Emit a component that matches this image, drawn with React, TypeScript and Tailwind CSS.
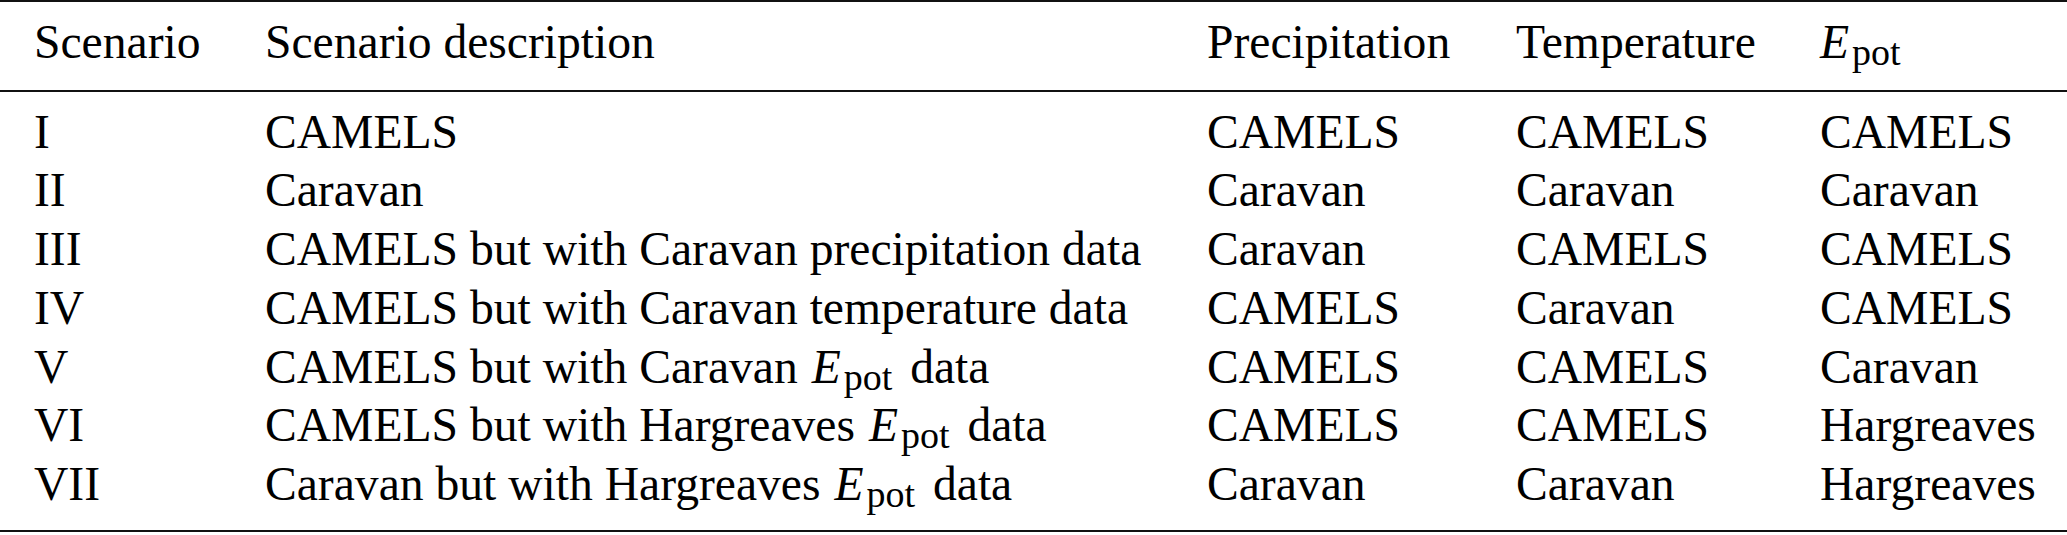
const ROWS = [
  { id: "I", desc: ["CAMELS"], p: "CAMELS", t: "CAMELS", e: "CAMELS" },
  { id: "II", desc: ["Caravan"], p: "Caravan", t: "Caravan", e: "Caravan" },
  { id: "III", desc: ["CAMELS but with Caravan precipitation data"], p: "Caravan", t: "CAMELS", e: "CAMELS" },
  { id: "IV", desc: ["CAMELS but with Caravan temperature data"], p: "CAMELS", t: "Caravan", e: "CAMELS" },
  { id: "V", desc: ["CAMELS but with Caravan ", " data"], p: "CAMELS", t: "CAMELS", e: "Caravan" },
  { id: "VI", desc: ["CAMELS but with Hargreaves ", " data"], p: "CAMELS", t: "CAMELS", e: "Hargreaves" },
  { id: "VII", desc: ["Caravan but with Hargreaves ", " data"], p: "Caravan", t: "Caravan", e: "Hargreaves" },
];

const GRID = "grid grid-cols-[231px_942px_309px_304px_1fr] pl-[34px]";

// E with "pot" subscript, as typeset in the source table
function Epot({ inline = false }: { inline?: boolean }) {
  return (
    <span className={`whitespace-nowrap ${inline ? "ml-[2px] mr-[6px]" : ""}`}>
      <span className="italic">E</span>
      <span className="relative top-[7px] ml-[3px] text-[38px] leading-none">pot</span>
    </span>
  );
}

export default function App() {
  return (
    <div
      className="w-[2067px] h-[535px] bg-white text-black text-[47.6px] overflow-hidden"
      style={{ fontFamily: '"Liberation Serif", "Times New Roman", serif' }}
    >
      <div className="h-[2px] bg-[#111]" />
      <div className={`${GRID} pt-[11px] pb-[18px] leading-[58.7px]`}>
        <div>Scenario</div>
        <div>Scenario description</div>
        <div>Precipitation</div>
        <div>Temperature</div>
        <div>
          <Epot />
        </div>
      </div>
      <div className="h-[2px] bg-[#111]" />
      <div className="pt-[11px] pb-[16px] leading-[58.7px]">
        {ROWS.map((r) => (
          <div key={r.id} className={GRID}>
            <div>{r.id}</div>
            <div className="whitespace-nowrap">
              {r.desc.length > 1 ? (
                <>
                  {r.desc[0]}
                  <Epot inline />
                  {r.desc[1]}
                </>
              ) : (
                r.desc[0]
              )}
            </div>
            <div>{r.p}</div>
            <div>{r.t}</div>
            <div>{r.e}</div>
          </div>
        ))}
      </div>
      <div className="h-[2px] bg-[#111]" />
    </div>
  );
}
